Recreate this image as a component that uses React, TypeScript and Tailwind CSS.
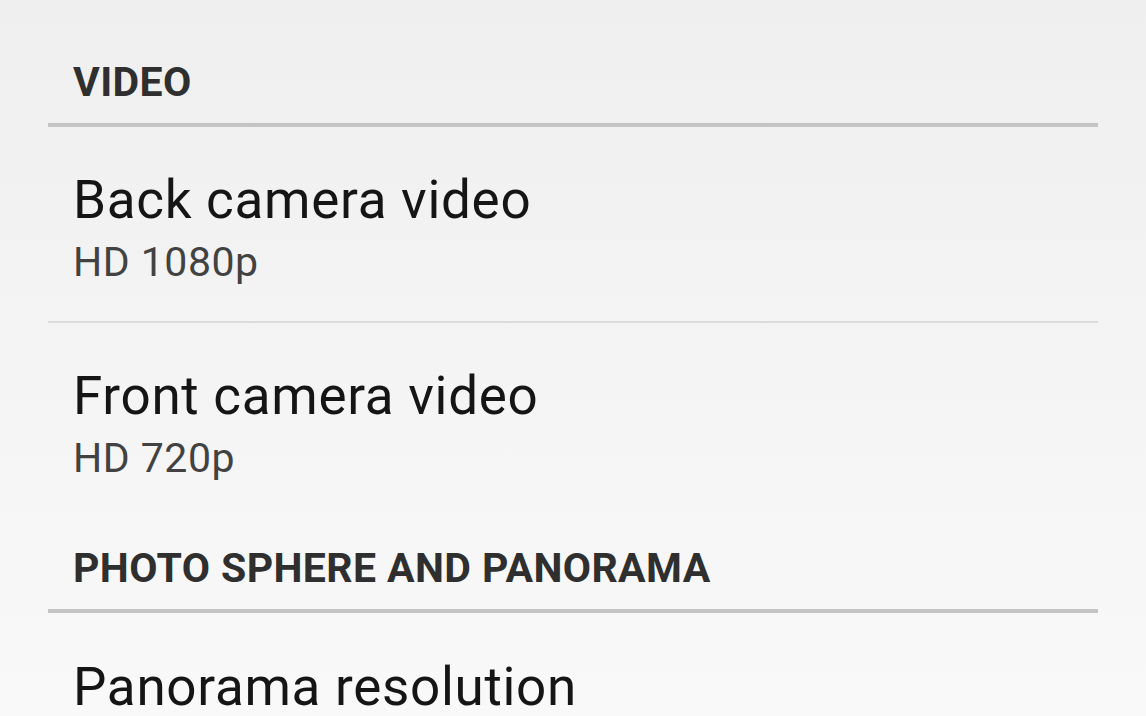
import React from "react";

function Header({ text, top }: { text: string; top: string }) {
  return (
    <div className={top}>
      <div className="pl-[25px] text-[41px] leading-none font-bold tracking-[0.4px] text-[#2f2f2f] h-[41px] whitespace-nowrap">
        {text}
      </div>
      <div className="mt-[20px] h-[4px] bg-[#c4c4c4]" />
    </div>
  );
}

function Item({
  title,
  subtitle,
  divider,
  top,
}: {
  title: string;
  subtitle?: string;
  divider?: boolean;
  top: string;
}) {
  return (
    <div className="flex flex-col">
      <div className={`${top} pl-[25px]`}>
        <div className="text-[53px] leading-none tracking-[0.7px] text-[#151515] h-[53px] whitespace-nowrap">{title}</div>
        {subtitle && (
          <div className="mt-[15px] text-[41px] leading-none tracking-[0.5px] text-[#424242] h-[41px] whitespace-nowrap">
            {subtitle}
          </div>
        )}
      </div>
      {divider && <div className="mt-[38px] h-[2px] bg-[#dcdcdc]" />}
    </div>
  );
}

export default function App() {
  return (
    <div
      className="w-[1146px] h-[716px] overflow-hidden bg-gradient-to-b from-[#efefef] to-[#f9f9f9] px-[48px]"
      style={{ fontFamily: "Roboto, 'Noto Sans', sans-serif" }}
    >
      <Header text="VIDEO" top="pt-[62px]" />
      <Item title="Back camera video" subtitle="HD 1080p" divider top="pt-[47px]" />
      <Item title="Front camera video" subtitle="HD 720p" top="pt-[47px]" />
      <Header text="PHOTO SPHERE AND PANORAMA" top="pt-[69px]" />
      <Item title="Panorama resolution" top="pt-[48px]" />
    </div>
  );
}
